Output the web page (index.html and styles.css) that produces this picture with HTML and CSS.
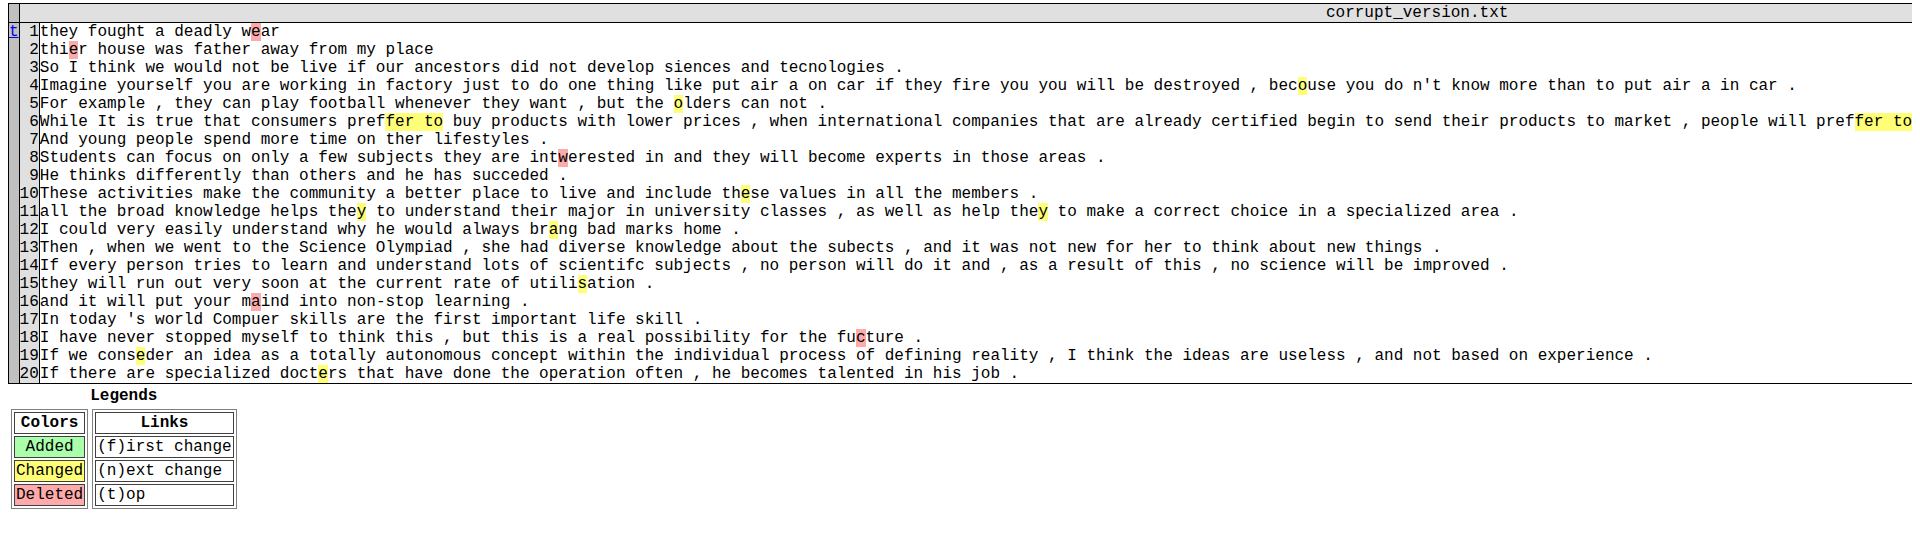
FILE: index.html
```html
<!DOCTYPE html>
<html>
<head>
<meta charset="utf-8">
<title>corrupt_version.txt</title>
<link rel="stylesheet" href="styles.css">
</head>
<body>
<table class="diff main" id="difflib_chg_to0__top">
  <thead>
    <tr><th class="next"><br></th><th colspan="2" class="head">corrupt_version.txt</th></tr>
  </thead>
  <tbody>
    <tr><td class="next"><a href="#difflib_chg_to0__top">t</a></td><td class="num">1</td><td class="txt">they fought a deadly w<span class="sub">e</span>ar</td></tr>
    <tr><td class="next"></td><td class="num">2</td><td class="txt">thi<span class="sub">e</span>r house was father away from my place</td></tr>
    <tr><td class="next"></td><td class="num">3</td><td class="txt">So I think we would not be live if our ancestors did not develop siences and tecnologies .</td></tr>
    <tr><td class="next"></td><td class="num">4</td><td class="txt">Imagine yourself you are working in factory just to do one thing like put air a on car if they fire you you will be destroyed , bec<span class="chg">o</span>use you do n't know more than to put air a in car .</td></tr>
    <tr><td class="next"></td><td class="num">5</td><td class="txt">For example , they can play football whenever they want , but the <span class="chg">o</span>lders can not .</td></tr>
    <tr><td class="next"></td><td class="num">6</td><td class="txt">While It is true that consumers pref<span class="chg">fer to</span> buy products with lower prices , when international companies that are already certified begin to send their products to market , people will pref<span class="chg">fer to</span> buy from them because they trust the quality of the certified products more than cheap ones .</td></tr>
    <tr><td class="next"></td><td class="num">7</td><td class="txt">And young people spend more time on ther lifestyles .</td></tr>
    <tr><td class="next"></td><td class="num">8</td><td class="txt">Students can focus on only a few subjects they are int<span class="sub">w</span>erested in and they will become experts in those areas .</td></tr>
    <tr><td class="next"></td><td class="num">9</td><td class="txt">He thinks differently than others and he has succeded .</td></tr>
    <tr><td class="next"></td><td class="num">10</td><td class="txt">These activities make the community a better place to live and include th<span class="chg">e</span>se values in all the members .</td></tr>
    <tr><td class="next"></td><td class="num">11</td><td class="txt">all the broad knowledge helps the<span class="chg">y</span> to understand their major in university classes , as well as help the<span class="chg">y</span> to make a correct choice in a specialized area .</td></tr>
    <tr><td class="next"></td><td class="num">12</td><td class="txt">I could very easily understand why he would always br<span class="chg">a</span>ng bad marks home .</td></tr>
    <tr><td class="next"></td><td class="num">13</td><td class="txt">Then , when we went to the Science Olympiad , she had diverse knowledge about the subects , and it was not new for her to think about new things .</td></tr>
    <tr><td class="next"></td><td class="num">14</td><td class="txt">If every person tries to learn and understand lots of scientifc subjects , no person will do it and , as a result of this , no science will be improved .</td></tr>
    <tr><td class="next"></td><td class="num">15</td><td class="txt">they will run out very soon at the current rate of utili<span class="chg">s</span>ation .</td></tr>
    <tr><td class="next"></td><td class="num">16</td><td class="txt">and it will put your m<span class="sub">a</span>ind into non-stop learning .</td></tr>
    <tr><td class="next"></td><td class="num">17</td><td class="txt">In today 's world Compuer skills are the first important life skill .</td></tr>
    <tr><td class="next"></td><td class="num">18</td><td class="txt">I have never stopped myself to think this , but this is a real possibility for the fu<span class="sub">c</span>ture .</td></tr>
    <tr><td class="next"></td><td class="num">19</td><td class="txt">If we cons<span class="chg">e</span>der an idea as a totally autonomous concept within the individual process of defining reality , I think the ideas are useless , and not based on experience .</td></tr>
    <tr><td class="next"></td><td class="num">20</td><td class="txt">If there are specialized doct<span class="chg">e</span>rs that have done the operation often , he becomes talented in his job .</td></tr>
  </tbody>
</table>
<table class="diff legend">
  <tr><th colspan="2">Legends</th></tr>
  <tr>
    <td>
      <table class="box">
        <tr><th>Colors</th></tr>
        <tr><td class="add">&nbsp;Added&nbsp;</td></tr>
        <tr><td class="chg">Changed</td></tr>
        <tr><td class="sub">Deleted</td></tr>
      </table>
    </td>
    <td>
      <table class="box">
        <tr><th colspan="2">Links</th></tr>
        <tr><td>(f)irst change</td></tr>
        <tr><td>(n)ext change</td></tr>
        <tr><td>(t)op</td></tr>
      </table>
    </td>
  </tr>
</table>
</body>
</html>
```
FILE: styles.css
```css
body {
  margin: 3px 8px 8px 8px;
  background: #ffffff;
  color: #000000;
}

.diff {
  font-family: "Liberation Mono", "Courier New", monospace;
  font-size: 16px;
  line-height: 18px;
}

.main {
  border-collapse: collapse;
  border: 1px solid #000000;
}

.main th,
.main td {
  padding: 0;
  white-space: pre;
}

.main th {
  font-weight: normal;
  background: #e0e0e0;
  border-bottom: 1px solid #000000;
  text-align: center;
}

.main .next {
  background: #c0c0c0;
  border-right: 1px solid #000000;
}

.main .num {
  background: #e0e0e0;
  text-align: right;
  border-right: 1px solid #000000;
}

.main .txt {
  text-align: left;
}

.main a {
  color: #0000ee;
}

.add { background: #aaffaa; }
.chg { background: #ffff77; }
.sub { background: #ffaaaa; }

.legend {
  border-collapse: separate;
  border-spacing: 2px;
}

.legend > tbody > tr > th,
.legend > tbody > tr > td {
  padding: 1px;
}

.legend th {
  font-weight: bold;
  text-align: center;
}

.box {
  border-collapse: separate;
  border-spacing: 2px;
  border: 1px solid #808080;
}

.box th,
.box td {
  border: 1px solid #404040;
  padding: 1px;
  white-space: nowrap;
}

.box td {
  text-align: left;
}
```
